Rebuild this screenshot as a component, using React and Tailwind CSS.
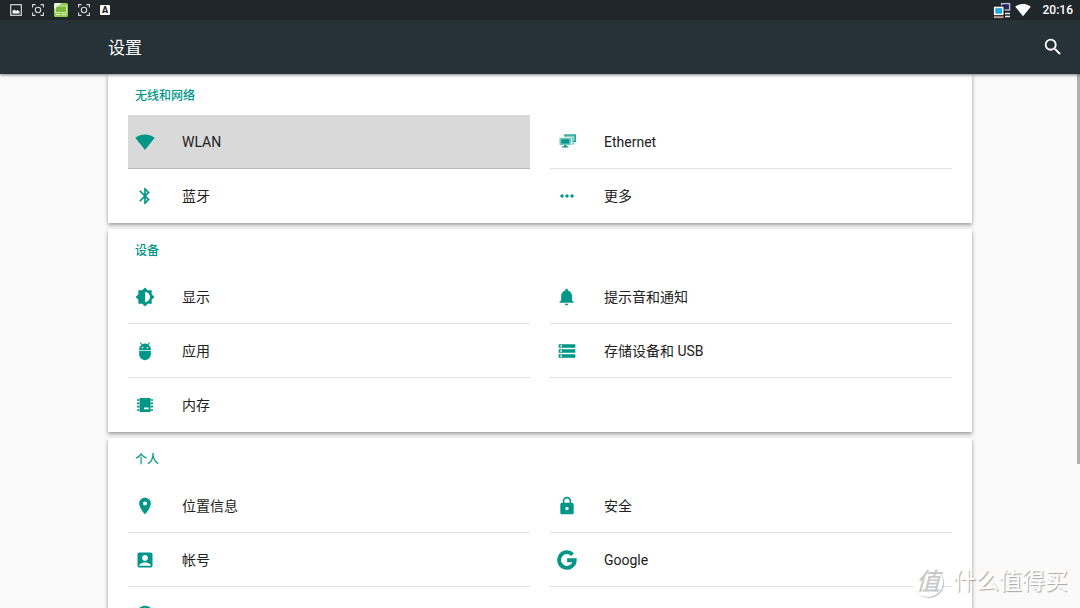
import React from 'react'
import {
  MdAccountBox,
  MdAdb,
  MdBluetooth,
  MdLanguage,
  MdLocationOn,
  MdLock,
  MdMoreHoriz,
  MdSearch,
  MdSignalWifi4Bar,
  MdStorage,
} from 'react-icons/md'

function EthernetIcon({ className }) {
  return (
    <svg viewBox="0 0 24 24" fill="none" className={className}>
      <rect x="9" y="3" width="13.5" height="9" fill="currentColor" opacity="0.45" />
      <path d="M9.500 5.500V3.600h12.400v8h-3.400" stroke="currentColor" strokeWidth="1.300" />
      <path d="M18 14.200h2.500" stroke="currentColor" strokeWidth="1.600" opacity="0.7" />
      <rect x="2.400" y="6.300" width="15" height="10" fill="#fff" />
      <rect x="3" y="7" width="13.800" height="8.600" fill="currentColor" opacity="0.55" />
      <rect x="5.200" y="8.800" width="9.400" height="5" fill="currentColor" />
      <path d="M8.600 15.600h2.600v1.500h2.400v1.500H6.200v-1.500h2.400z" fill="currentColor" />
    </svg>
  )
}

function BrightnessIcon({ className }) {
  return (
    <svg viewBox="0 0 24 24" fill="currentColor" className={className}>
      <path d="M20 15.31L23.31 12 20 8.69V4h-4.69L12 .69 8.69 4H4v4.69L.69 12 4 15.31V20h4.69L12 23.31 15.31 20H20v-4.69zM12 18V6c3.31 0 6 2.69 6 6s-2.69 6-6 6z" />
    </svg>
  )
}

function BellIcon({ className }) {
  return (
    <svg viewBox="0 0 24 24" fill="currentColor" className={className}>
      <path d="M11.5 22c1.1 0 2-.9 2-2h-4c0 1.1.9 2 2 2zm6.5-6v-5.5c0-3.07-2.13-5.64-5-6.32V3.5c0-.83-.67-1.5-1.5-1.5S10 2.67 10 3.5v.68c-2.87.68-5 3.25-5 6.32V16l-2 2v1h17v-1l-2-2z" />
    </svg>
  )
}

function MemoryIcon({ className }) {
  return (
    <svg viewBox="0 0 24 24" fill="currentColor" className={className}>
      <path fillRule="evenodd" d="M5.6 3.6h13v16.8h-13zM10.8 15h5.6v2h-5.6z" />
      <path d="M2.400 5h3v2h-3zM2.400 9h3v2h-3zM2.400 13h3v2h-3zM2.400 17h3v2h-3zM18.600 5h3v2h-3zM18.600 9h3v2h-3zM18.600 13h3v2h-3zM18.600 17h3v2h-3z" />
    </svg>
  )
}

function GoogleIcon({ className }) {
  return (
    <svg viewBox="0 0 24 24" fill="none" className={className}>
      <path d="M18.7 5.5A9.4 9.4 0 1 0 21.3 12.3H12.2" stroke="currentColor" strokeWidth="4.6" />
    </svg>
  )
}

const sections = [
  {
    title: '无线和网络',
    items: [
      { label: 'WLAN', icon: MdSignalWifi4Bar, active: true },
      { label: 'Ethernet', icon: EthernetIcon },
      { label: '蓝牙', icon: MdBluetooth, last: true },
      { label: '更多', icon: MdMoreHoriz, last: true },
    ],
  },
  {
    title: '设备',
    items: [
      { label: '显示', icon: BrightnessIcon },
      { label: '提示音和通知', icon: BellIcon },
      { label: '应用', icon: MdAdb },
      { label: '存储设备和 USB', icon: MdStorage },
      { label: '内存', icon: MemoryIcon, last: true },
    ],
  },
  {
    title: '个人',
    items: [
      { label: '位置信息', icon: MdLocationOn },
      { label: '安全', icon: MdLock },
      { label: '帐号', icon: MdAccountBox },
      { label: 'Google', icon: GoogleIcon },
      { label: '', icon: MdLanguage, last: true },
    ],
  },
]

function ImageIcon() {
  return (
    <svg viewBox="0 0 12 12" className="size-3">
      <rect x="0.7" y="0.7" width="10.6" height="10.6" fill="none" stroke="#d5d8d9" strokeWidth="1.2" />
      <path d="M2.5 9.5V7l1.8-1.6L6 7l1.6-1 1.9 1.5v2z" fill="#fff" />
    </svg>
  )
}

function CaptureIcon() {
  return (
    <svg viewBox="0 0 12 12" fill="none" stroke="#d5d8d9" strokeWidth="1.1" className="size-3">
      <path d="M.6 3.5V.6h2.9M8.5.6h2.9v2.9M11.4 8.5v2.9H8.5M3.5 11.4H.6V8.5" />
      <circle cx="6" cy="6" r="2.7" />
    </svg>
  )
}

function DesktopIcon() {
  return (
    <svg viewBox="0 0 14 14" className="size-3.5">
      <rect width="14" height="14" rx="1.5" fill="#93c94f" />
      <rect x="1.5" y="3" width="11" height="6.5" fill="#7cb83c" stroke="#e3f2c8" strokeWidth="0.8" />
      <path d="M0 6V1.500Q0 0 1.500 0H8z" fill="#e4f3dc" />
      <path d="M2 11.500h4M8 11.500h4" stroke="#eef7df" strokeWidth="1.200" />
    </svg>
  )
}

function NetworkIcon() {
  return (
    <svg viewBox="0 0 18 17" className="h-[17px] w-[18px]">
      <rect x="8.6" y="1.6" width="8" height="6.4" fill="#26266b" stroke="#b9b9cc" strokeWidth="1.4" />
      <path d="M12 11.500h5M12 14.500h5" stroke="#e6e6e6" strokeWidth="1.600" />
      <rect x="0" y="3.500" width="11.500" height="13.500" fill="#17171c" />
      <rect x="1.600" y="5.400" width="8.200" height="7" fill="#18a7e0" stroke="#fff" strokeWidth="1.500" />
      <path d="M.8 15.200h9.800" stroke="#b79f97" strokeWidth="2" />
    </svg>
  )
}

function StatusBar() {
  return (
    <div className="flex h-5 shrink-0 items-center justify-between bg-[#20272b] pr-[7px] pl-2.5 text-white">
      <div className="flex items-center gap-2.5">
        <ImageIcon />
        <CaptureIcon />
        <DesktopIcon />
        <CaptureIcon />
        <span className="flex size-2.5 items-center justify-center rounded-[1px] bg-white text-[9px] leading-none font-black text-[#20272b]">
          A
        </span>
      </div>
      <div className="flex items-center">
        <NetworkIcon />
        <MdSignalWifi4Bar className="ml-1 size-4" />
        <span className="ml-3 text-xs leading-5 font-medium">20:16</span>
      </div>
    </div>
  )
}

function SettingItem({ item }) {
  const Icon = item.icon
  const border = item.last ? 'border-transparent' : item.active ? 'border-[#b8b8b8]' : 'border-[#e0e0e0]'
  return (
    <li>
      <button
        type="button"
        className={`flex h-[54px] w-full items-center border-b pl-[7px] text-left ${border} ${item.active ? 'bg-[#d9d9d9]' : ''}`}
      >
        <Icon className="size-5 shrink-0 text-[#009688]" />
        <span className="ml-[27px] text-sm text-[#212121]">{item.label}</span>
      </button>
    </li>
  )
}

function SettingCard({ section }) {
  return (
    <section className="bg-white px-5 shadow-[0_2px_4px_rgba(0,0,0,0.4)]">
      <h2 className="flex h-[41px] items-center pt-0.5 pl-[7px] text-xs font-medium text-[#009688]">{section.title}</h2>
      <ul className="grid grid-cols-2 gap-x-5">
        {section.items.map((item) => (
          <SettingItem key={item.label} item={item} />
        ))}
      </ul>
    </section>
  )
}

function Watermark() {
  return (
    <div className="pointer-events-none absolute right-3 bottom-2.5 flex items-center gap-2.5 text-white">
      <span className="flex size-[30px] items-center justify-center rounded-full bg-white text-2xl leading-none font-medium text-[#c8c8c8] italic shadow-[1px_1px_1px_rgba(0,0,0,0.25)]">
        值
      </span>
      <span className="text-[23px] leading-8 [text-shadow:1px_1px_1px_rgba(0,0,0,0.35)]">什么值得买</span>
    </div>
  )
}

function App() {
  return (
    <div className="relative flex h-screen flex-col overflow-hidden bg-[#fafafa] font-[Roboto,'Noto_Sans_CJK_SC',sans-serif]">
      <StatusBar />
      <header className="z-10 flex h-[54px] shrink-0 items-center justify-between bg-[#263238] pr-4 pl-[10%] text-white shadow-[0_1px_3px_rgba(0,0,0,0.5)]">
        <h1 className="pt-0.5 text-[17px] leading-6">设置</h1>
        <button type="button" aria-label="搜索">
          <MdSearch className="size-[22px]" />
        </button>
      </header>
      <main className="relative flex-1 overflow-hidden">
        <div className="mx-[10%] flex flex-col gap-1.5">
          {sections.map((section) => (
            <SettingCard key={section.title} section={section} />
          ))}
        </div>
        <div className="absolute top-0 right-0 h-[73%] w-[3px] bg-[#b0b0b0]" />
      </main>
      <Watermark />
    </div>
  )
}

export default App
